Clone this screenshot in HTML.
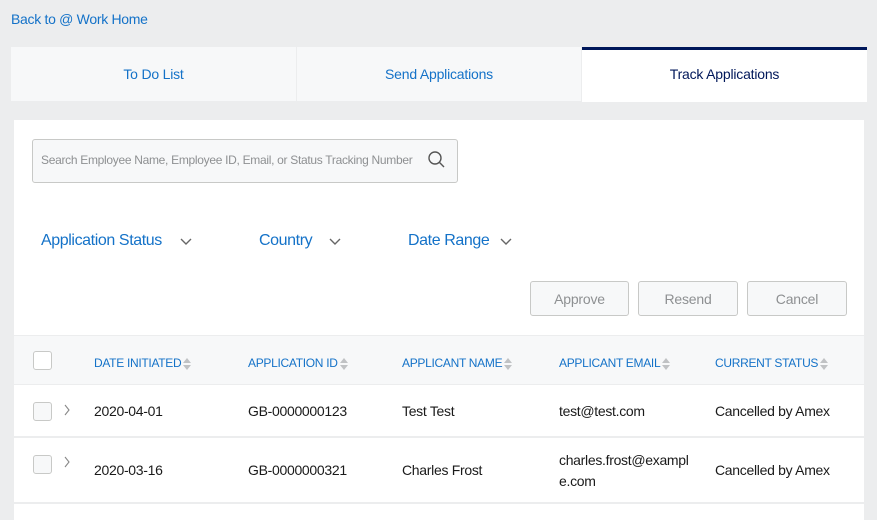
<!DOCTYPE html><html><head><style>
*{margin:0;padding:0;box-sizing:border-box}
body{width:877px;height:510px;background:#ecedee;font-family:"Liberation Sans",Arial,sans-serif;position:relative;overflow:hidden;color:#1a1a1a}
.a{position:absolute;white-space:nowrap}
.b{color:#1472c8}
.tab{position:absolute;top:47px;height:54px;background:#f7f8f9;font-size:14px;display:flex;align-items:center;justify-content:center;color:#1472c8;letter-spacing:-.2px}
.btn{position:absolute;top:281px;height:35px;border:1px solid #c8c9c7;border-radius:3px;background:#f7f8f9;color:#8e9092;font-size:14px;display:flex;align-items:center;justify-content:center;letter-spacing:-.2px}
.th{position:absolute;top:356px;font-size:12px;color:#1472c8;letter-spacing:-.3px}
.td{position:absolute;font-size:14px;letter-spacing:-.3px;color:#1a1a1a}
.cb{position:absolute;width:19px;height:19px;border:1px solid #c8c9c7;border-radius:3px;background:#f7f8f9}
.sort{display:inline-block;vertical-align:middle;margin-left:2px;width:8px;height:12px;position:relative}
.sort:before,.sort:after{content:"";position:absolute;left:0;border-left:4px solid transparent;border-right:4px solid transparent}
.sort:before{top:0;border-bottom:5px solid #c0c2c4}
.sort:after{top:7px;border-top:5px solid #c0c2c4}
.f{position:absolute;top:232px;font-size:16px;letter-spacing:-.4px;color:#1472c8;white-space:nowrap}
</style></head><body>
<div class="a b" style="left:11px;top:11px;font-size:14px;letter-spacing:-.3px">Back to @ Work Home</div>
<div class="tab" style="left:11px;width:285px">To Do List</div>
<div class="tab" style="left:297px;width:284px">Send Applications</div>
<div class="tab" style="left:582px;width:285px;background:#fff;border-top:3px solid #00175a;color:#00175a;height:55px;padding-bottom:4px">Track Applications</div>
<div class="a" style="left:14px;top:120px;width:850px;height:400px;background:#fff"></div>
<div class="a" style="left:32px;top:139px;width:426px;height:44px;border:1px solid #c8c9c7;border-radius:3px;background:#f7f8f9"></div>
<div class="a" style="left:41px;top:153px;font-size:12px;color:#8e9092;letter-spacing:-.3px">Search Employee Name, Employee ID, Email, or Status Tracking Number</div>
<svg class="a" style="left:427px;top:150px" width="20" height="20" viewBox="0 0 20 20"><circle cx="8" cy="8" r="6" fill="none" stroke="#555" stroke-width="1.4"/><path d="M12.3 12.3L17 17" stroke="#555" stroke-width="1.4"/></svg>
<div class="f" style="left:41px">Application Status</div>
<div class="f" style="left:259px">Country</div>
<div class="f" style="left:408px">Date Range</div>
<svg class="a" style="left:180px;top:238px" width="12" height="8"><path d="M1 1L6 6L11 1" fill="none" stroke="#666" stroke-width="1.4"/></svg>
<svg class="a" style="left:329px;top:238px" width="12" height="8"><path d="M1 1L6 6L11 1" fill="none" stroke="#666" stroke-width="1.4"/></svg>
<svg class="a" style="left:500px;top:238px" width="12" height="8"><path d="M1 1L6 6L11 1" fill="none" stroke="#666" stroke-width="1.4"/></svg>
<div class="btn" style="left:530px;width:99px">Approve</div>
<div class="btn" style="left:638px;width:100px">Resend</div>
<div class="btn" style="left:747px;width:100px">Cancel</div>
<div class="a" style="left:14px;top:335px;width:850px;height:50px;background:#f7f8f9;border-top:1px solid #ecedee;border-bottom:1px solid #ecedee"></div>
<div class="cb" style="left:33px;top:351px;background:#fff"></div>
<div class="th" style="left:94px">DATE INITIATED<span class="sort"></span></div>
<div class="th" style="left:248px">APPLICATION ID<span class="sort"></span></div>
<div class="th" style="left:402px">APPLICANT NAME<span class="sort"></span></div>
<div class="th" style="left:559px">APPLICANT EMAIL<span class="sort"></span></div>
<div class="th" style="left:715px">CURRENT STATUS<span class="sort"></span></div>
<div class="a" style="left:14px;top:436px;width:850px;height:2px;background:#ecedee"></div>
<div class="a" style="left:14px;top:502px;width:850px;height:2px;background:#ecedee"></div>
<div class="cb" style="left:33px;top:402px"></div>
<svg class="a" style="left:63px;top:404px" width="8" height="12"><path d="M2 1L6 6L2 11" fill="none" stroke="#888" stroke-width="1.1"/></svg>
<div class="td" style="left:94px;top:403px">2020-04-01</div>
<div class="td" style="left:248px;top:403px">GB-0000000123</div>
<div class="td" style="left:402px;top:403px">Test Test</div>
<div class="td" style="left:559px;top:403px">test@test.com</div>
<div class="td" style="left:715px;top:403px">Cancelled by Amex</div>
<div class="cb" style="left:33px;top:455px"></div>
<svg class="a" style="left:63px;top:456px" width="8" height="12"><path d="M2 1L6 6L2 11" fill="none" stroke="#888" stroke-width="1.1"/></svg>
<div class="td" style="left:94px;top:462px">2020-03-16</div>
<div class="td" style="left:248px;top:462px">GB-0000000321</div>
<div class="td" style="left:402px;top:462px">Charles Frost</div>
<div class="td" style="left:559px;top:450px;line-height:21px">charles.frost@exampl<br>e.com</div>
<div class="td" style="left:715px;top:462px">Cancelled by Amex</div>
</body></html>
